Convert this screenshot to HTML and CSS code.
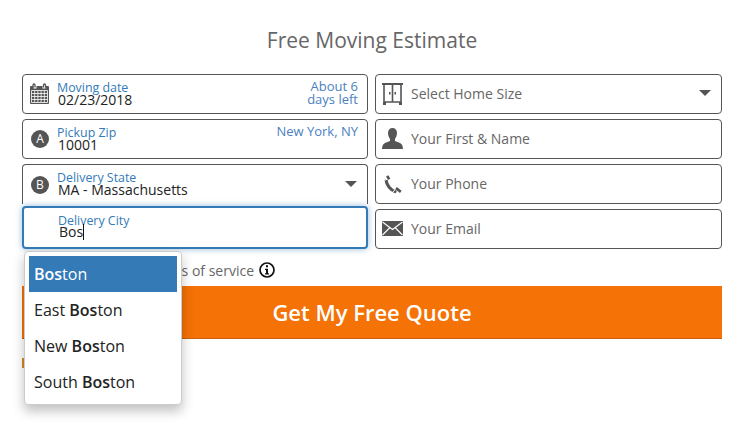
FILE: index.html
```html
<!doctype html>
<html>
<head>
    <meta charset="utf-8">
    <title>Free Moving Estimate</title>
    <link rel="stylesheet" href="styles.css">
</head>
<body>
<div class="quote-page">
    <h1 class="quote-title">Free Moving Estimate</h1>

    <div class="quote-grid">
        <div class="quote-col">
            <div class="field">
                <svg class="field-icon icon-cal" width="19" height="21" viewBox="0 0 19 21">
                    <path fill="#555" d="M1 3h2.500v2.500h3V3h6v2.500h3V3H18a1 1 0 0 1 1 1v16a1 1 0 0 1-1 1H1a1 1 0 0 1-1-1V4a1 1 0 0 1 1-1z"/>
                    <path fill="none" stroke="#555" stroke-width="1.300" d="M5 4.500V2a1 1 0 0 0-2 0v2.500M15.500 4.500V2a1 1 0 0 0-2 0v2.500"/>
                    <path fill="none" stroke="#fff" stroke-width=".8" d="M1.500 7.500h16v12h-16zM1.500 10.500h16M1.500 13.500h16M1.500 16.500h16M4.700 7.500v12M7.900 7.500v12M11.100 7.500v12M14.300 7.500v12"/>
                </svg>
                <div class="field-text">
                    <span class="field-label">Moving date</span>
                    <span class="field-value">02/23/2018</span>
                </div>
                <span class="field-note">About 6<br>days left</span>
            </div>

            <div class="field">
                <span class="badge">A</span>
                <div class="field-text">
                    <span class="field-label">Pickup Zip</span>
                    <span class="field-value">10001</span>
                </div>
                <span class="field-note">New York, NY</span>
            </div>

            <div class="field field-state">
                <span class="badge">B</span>
                <div class="field-text">
                    <span class="field-label">Delivery State</span>
                    <span class="field-value">MA - Massachusetts</span>
                </div>
                <span class="caret"></span>
            </div>

            <div class="city-wrap">
                <div class="field field-focus">
                    <span class="field-icon-gap"></span>
                    <div class="field-text">
                        <span class="field-label">Delivery City</span>
                        <span class="field-value">Bos<span class="text-cursor"></span></span>
                    </div>
                </div>

                <ul class="suggest">
                    <li class="suggest-active"><b>Bos</b>ton</li>
                    <li>East <b>Bos</b>ton</li>
                    <li>New <b>Bos</b>ton</li>
                    <li>South <b>Bos</b>ton</li>
                </ul>
            </div>
        </div>

        <div class="quote-col">
            <div class="field">
                <svg class="field-icon" width="21" height="22" viewBox="0 0 21 22">
                    <path fill="none" stroke="#555" stroke-width="1.600" d="M2 1h17v18H2zM10.500 1v18"/>
                    <path fill="#555" d="M0 0h21v2H0zM1 19h3v3H1zM17 19h3v3h-3zM7 9h1.500v2.500H7zM12.500 9H14v2.500h-1.500z"/>
                </svg>
                <span class="field-placeholder">Select Home Size</span>
                <span class="caret"></span>
            </div>

            <div class="field">
                <svg class="field-icon" width="21" height="21" viewBox="0 0 21 21">
                    <path fill="#555" d="M10.500 0c2.800 0 4.500 2 4.500 5 0 2.500-.9 4.500-2 5.800v2.200c2.200 1 6 1.800 7 3.700.5 1.100 1 2.800 1 4.300H0c0-1.500.5-3.200 1-4.300 1-1.900 4.800-2.700 7-3.700v-2.200C6.900 9.500 6 7.500 6 5 6 2 7.700 0 10.500 0z"/>
                </svg>
                <span class="field-placeholder">Your First &amp; Name</span>
            </div>

            <div class="field">
                <svg class="field-icon icon-phone" width="18" height="19" viewBox="0 0 18 19">
                    <path fill="none" stroke="#555" stroke-width="3.200" stroke-linecap="round" d="M2.200 5.500C2.500 10 6.500 15 11 16.500"/>
                    <path fill="none" stroke="#fff" stroke-width="1" d="M.500 5.300L6 3M8.500 17.500l3.500-4"/>
                    <path fill="none" stroke="#555" stroke-width="2.700" d="M3.200.800l2 3.600M12 13.200l4.800 3.600"/>
                </svg>
                <span class="field-placeholder">Your Phone</span>
            </div>

            <div class="field">
                <svg class="field-icon" width="21" height="15" viewBox="0 0 21 15">
                    <path fill="#555" d="M0 0h21v15H0z"/>
                    <path fill="none" stroke="#fff" stroke-width="1.100" d="M.500 1l10 7.500 10-7.500M.500 14l7.500-7.500M20.500 14L13 6.500"/>
                </svg>
                <span class="field-placeholder">Your Email</span>
            </div>
        </div>
    </div>

    <p class="terms">Terms of service
        <svg class="info-icon" width="16" height="16" viewBox="0 0 16 16">
            <circle cx="8" cy="8" r="7" fill="#fff" stroke="#111" stroke-width="1.700"/>
            <path fill="#111" d="M7 3.300h2v2H7zM6 6.800h3v4.500h1v1.200H6v-1.200h1V8H6z"/>
        </svg>
    </p>

    <button class="quote-button" type="button">Get My Free Quote</button>
    <div class="quote-sliver"></div>
</div>
</body>
</html>
```

FILE: styles.css
```css
* {
    box-sizing: border-box;
}

body {
    margin: 0;
    background: #fff;
    font-family: 'Open Sans', sans-serif;
    color: #555;
}

.quote-page {
    min-height: 435px;
    padding: 0 22px;
}

.quote-title {
    margin: 0;
    padding-top: 26px;
    height: 74px;
    font-size: 21px;
    line-height: 28px;
    font-weight: 400;
    text-align: center;
    color: #666;
}

/* two columns of fields */
.quote-grid {
    display: grid;
    grid-template-columns: 346px 347px;
    column-gap: 7px;
}

.quote-col {
    display: flex;
    flex-direction: column;
    gap: 5px;
}

.field {
    display: flex;
    align-items: center;
    height: 40px;
    padding: 0 9px 0 8px;
    border: 1px solid #555;
    border-radius: 4px;
    background: #fff;
}

.field-state {
    border-bottom: 0;
    border-radius: 4px 4px 0 0;
}

.field-focus {
    height: 43px;
    border: 2px solid #337ab7;
    box-shadow: 0 0 6px rgba(51, 122, 183, .5);
    padding-left: 7px;
}

.field-focus .field-text {
    padding-bottom: 2px;
}

.field-focus .field-value {
    margin-top: -2px;
}

.field-icon {
    flex: none;
    margin: -1px 8px 0 -2px;
}

.icon-cal {
    margin: -2px 8px 0 -1px;
}

.icon-phone {
    margin: 0 9px 0 0;
}

.field-icon-gap {
    flex: none;
    width: 27px;
}

.badge {
    flex: none;
    width: 18px;
    height: 18px;
    margin: 0 8px 0 0;
    border-radius: 50%;
    background: #555;
    color: #fff;
    font-size: 12px;
    line-height: 18px;
    text-align: center;
}

.field-text {
    flex: 1;
    display: flex;
    flex-direction: column;
}

.field-label {
    font-size: 12.400px;
    line-height: 11px;
    color: #337ab7;
}

.field-value {
    font-size: 14px;
    line-height: 14px;
    color: #222;
    margin-left: 1px;
}

.field-note {
    font-size: 13px;
    line-height: 13px;
    text-align: right;
    color: #4a7fc0;
    align-self: flex-start;
    margin-top: 5px;
}

.field-placeholder {
    flex: 1;
    font-size: 14px;
    line-height: 18px;
    color: #666;
}

.caret {
    flex: none;
    width: 0;
    height: 0;
    margin: -2px 1px 0 0;
    border-left: 6px solid transparent;
    border-right: 6px solid transparent;
    border-top: 6px solid #555;
}

.text-cursor {
    display: inline-block;
    width: 1px;
    height: 16px;
    margin-bottom: -3px;
    background: #111;
}

.city-wrap {
    position: relative;
    margin-top: -3px;
}

/* autocomplete list, lies over terms and button */
.suggest {
    position: absolute;
    top: 45px;
    left: 2px;
    z-index: 5;
    width: 158px;
    margin: 0;
    padding: 4px;
    list-style: none;
    background: #fff;
    border: 1px solid #ccc;
    border-radius: 4px;
    box-shadow: 0 6px 12px rgba(0, 0, 0, .25);
    font-size: 16px;
    color: #222;
}

.suggest li {
    height: 36px;
    padding-left: 5px;
    line-height: 36px;
}

.suggest b {
    font-weight: 600;
}

.suggest .suggest-active {
    background: #337ab7;
    color: #fff;
}

.terms {
    display: flex;
    align-items: center;
    justify-content: flex-end;
    gap: 5px;
    width: 253px;
    height: 37px;
    margin: 0;
    padding-top: 5px;
    font-size: 14px;
    color: #666;
}

.quote-button {
    display: block;
    width: 700px;
    height: 53px;
    border: 0;
    border-bottom: 1px solid #c9610a;
    background: #f47206;
    color: #fff;
    font-family: 'Open Sans', sans-serif;
    font-size: 22px;
    font-weight: 600;
}

/* tail of something hidden behind the list */
.quote-sliver {
    width: 10px;
    height: 10px;
    margin-top: 19px;
    background: #d98a1e;
}
```
